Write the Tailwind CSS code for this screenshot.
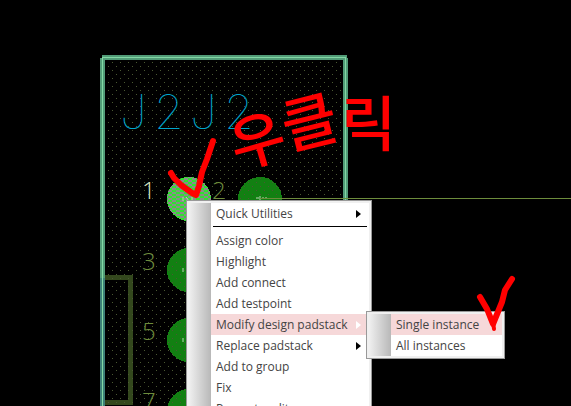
<!DOCTYPE html>
<html lang="ko">
<head>
  <meta charset="UTF-8" />
  <meta name="viewport" content="width=device-width, initial-scale=1.0" />
  <title>Modify design padstack</title>
  <script src="https://cdn.jsdelivr.net/npm/@tailwindcss/browser@4"></script>
</head>
<body class="relative h-screen overflow-hidden bg-black font-['Open_Sans','Noto_Sans_CJK_KR',sans-serif] text-xs text-[#444]">
  <!-- Board canvas -->
  <svg class="absolute top-0 left-0" width="100%" height="100%" aria-label="PCB canvas">
    <defs>
      <pattern id="dots" x="104" y="62" width="8" height="8" patternUnits="userSpaceOnUse">
        <rect width="1" height="1" fill="#4a5832" />
        <rect x="4" y="4" width="1" height="1" fill="#4a5832" />
      </pattern>
      <pattern id="check" width="8" height="4" patternUnits="userSpaceOnUse">
        <rect width="8" height="4" fill="#8b8b8b" />
        <rect width="4" height="2" fill="#2fe22f" />
        <rect x="4" y="2" width="4" height="2" fill="#2fe22f" />
      </pattern>
    </defs>

    <!-- Package outline -->
    <g shape-rendering="crispEdges">
      <path d="M100 58h2v-3h245v3h1v360H100z" fill="#529c78" />
      <path d="M100 278h5v140h-5z" fill="#3d8078" />
      <path d="M102 418V57h244v361h-1V58H103v360z" fill="#82d8a4" />
      <path d="M105 60h238v360H105z" fill="#000" />
      <path d="M105 275h28v130h-28v-5h23V280h-23z" fill="#33481d" />
    </g>

    <g fill="#128012" shape-rendering="crispEdges">
      <circle cx="260" cy="199" r="22" />
      <circle cx="189" cy="270" r="22" />
      <circle cx="189" cy="340" r="22" />
      <circle cx="189" cy="411" r="22" />
    </g>
    <rect x="105" y="60" width="238" height="346" fill="url(#dots)" />
    <circle cx="189" cy="199" r="22" fill="url(#check)" shape-rendering="crispEdges" />
    <path d="M183 197v4m3-4l3 4m3-4v4M256 198h3m1-2v5m3-4v2m3-2v2M183 268v4M183 338v4" fill="none" stroke="#b5dcb0" />
    <path d="M260 198.500H2000" stroke="#6d8c3c" />

    <!-- Reference designators -->
    <g class="font-['Inter',sans-serif] text-[48px] font-thin" fill="#00a5cc">
      <text x="120" y="129">J</text>
      <text x="154" y="129">2</text>
      <text x="190" y="129">J</text>
      <text x="224" y="129">2</text>
    </g>
    <g class="font-['Open_Sans',sans-serif] text-2xl font-light" fill="#6d8c3c">
      <text x="142" y="199" fill="#dce8c8">1</text>
      <text x="212" y="199">2</text>
      <text x="142" y="270">3</text>
      <text x="142" y="340">5</text>
      <text x="142" y="410">7</text>
    </g>
  </svg>

  <!-- Context menu -->
  <div role="menu" class="absolute top-[200px] left-[186px] flex w-[186px] border border-[#999] bg-[#f0f0f0] p-[2px]">
    <div class="w-[22px] shrink-0 bg-linear-to-r from-[#f0f0f0] to-[#b8b8b8]"></div>
    <div class="flex-1 bg-white">
      <button role="menuitem" class="flex h-[21px] w-full items-center justify-between pr-2 pl-[5px]">Quick Utilities
        <svg width="5" height="8" viewBox="0 0 5 8"><path d="M0 0v8l5-4z" fill="#000" /></svg>
      </button>
      <hr class="mx-[2px] mt-[2px] mb-[3px] border-black" />
      <button role="menuitem" class="flex h-[21px] w-full items-center pl-[5px]">Assign color</button>
      <button role="menuitem" class="flex h-[21px] w-full items-center pl-[5px]">Highlight</button>
      <button role="menuitem" class="flex h-[21px] w-full items-center pl-[5px]">Add connect</button>
      <button role="menuitem" class="flex h-[21px] w-full items-center pl-[5px]">Add testpoint</button>
      <button role="menuitem" class="flex h-[21px] w-full items-center justify-between bg-[#f6d8d9] pr-2 pl-[5px]">Modify design padstack
        <svg width="5" height="8" viewBox="0 0 5 8"><path d="M0 0v8l5-4z" fill="#fff" /></svg>
      </button>
      <button role="menuitem" class="flex h-[21px] w-full items-center justify-between pr-2 pl-[5px]">Replace padstack
        <svg width="5" height="8" viewBox="0 0 5 8"><path d="M0 0v8l5-4z" fill="#000" /></svg>
      </button>
      <button role="menuitem" class="flex h-[21px] w-full items-center pl-[5px]">Add to group</button>
      <button role="menuitem" class="flex h-[21px] w-full items-center pl-[5px]">Fix</button>
      <button role="menuitem" class="flex h-[21px] w-full items-center pl-[5px]">Property edit</button>
    </div>
  </div>

  <!-- Submenu -->
  <div role="menu" class="absolute top-[311px] left-[366px] flex w-[139px] border border-[#999] bg-[#f0f0f0] p-[2px]">
    <div class="w-[22px] shrink-0 bg-linear-to-r from-[#f0f0f0] to-[#b8b8b8]"></div>
    <div class="flex-1 bg-white">
      <button role="menuitem" class="flex h-[21px] w-full items-center bg-[#f6d8d9] pl-[5px]">Single instance</button>
      <button role="menuitem" class="flex h-[21px] w-full items-center pl-[5px]">All instances</button>
    </div>
  </div>

  <!-- Pen notes -->
  <svg class="pointer-events-none absolute top-0 left-0" width="100%" height="100%">
    <g fill="none" stroke="#f00" stroke-width="6" stroke-linecap="round" stroke-linejoin="round">
      <path d="M171 173l3 5 7 7 11 8 4 2 3-9 3-14 5-13 6-18" />
      <path d="M480 297l7 12 6 15 9-22 3-12 7-11" />
      <path d="M493 322l1 7" stroke-width="4" />
    </g>
    <g fill="#f00" class="font-['Noto_Sans_CJK_KR',sans-serif] text-[60px] font-medium">
      <text x="237" y="169" transform="rotate(-16 237 169)">우</text>
      <text x="288" y="150" transform="rotate(-14 288 150)">클</text>
      <text x="341" y="146">릭</text>
    </g>
  </svg>
</body>
</html>
